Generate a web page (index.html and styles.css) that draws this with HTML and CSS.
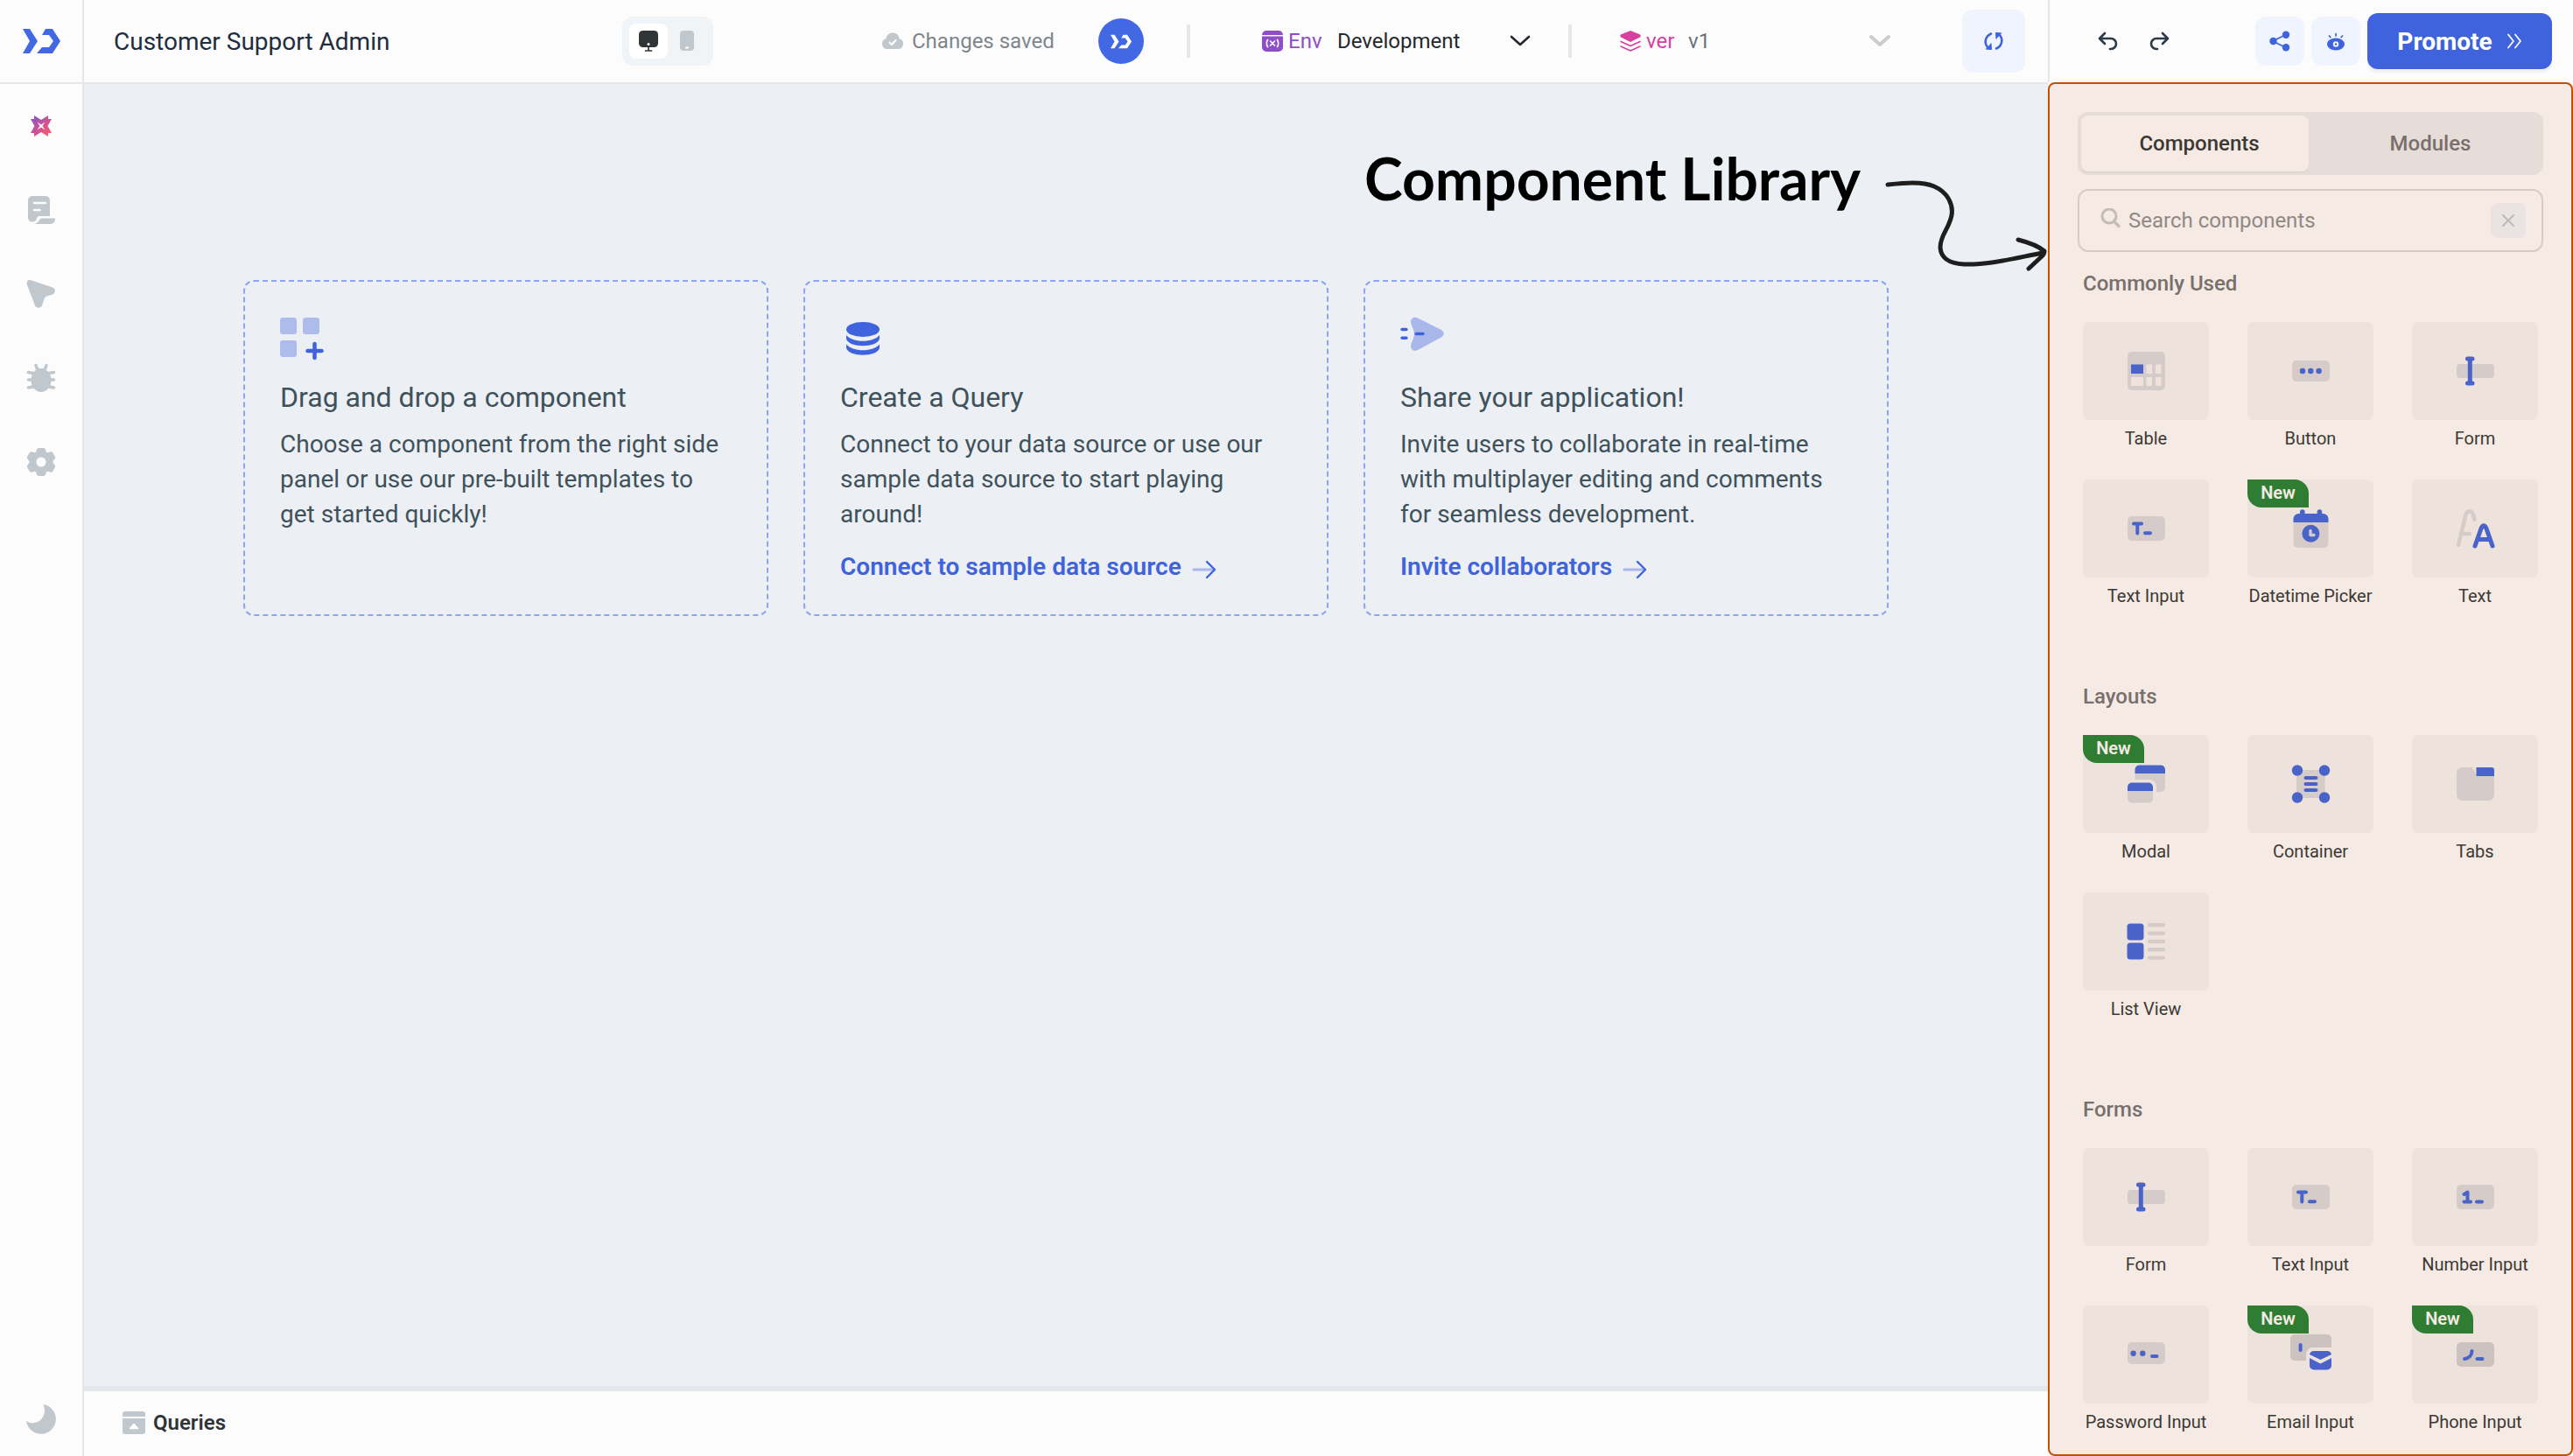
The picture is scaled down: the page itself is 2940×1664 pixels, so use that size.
FILE: index.html
```html
<!DOCTYPE html>
<html lang="en">
<head>
<meta charset="utf-8">
<meta name="viewport" content="width=device-width, initial-scale=1">
<title>Customer Support Admin</title>
<link rel="stylesheet" href="styles.css">
</head>
<body>
<svg class="sprite" aria-hidden="true">
  <symbol id="logo" viewBox="0 0 43 28"><path fill="currentColor" d="M0 0h8l9 14-9 14H0l8-14zM26 0h8l9 14-9 14H16l6-7h8l5-7-5-7h-8z"/></symbol>
  <symbol id="arrow" viewBox="0 0 28 22"><path d="M2 11h23" fill="none" stroke="#a9b8eb" stroke-width="3" stroke-linecap="round"/><path d="M17 2l9 9-9 9" fill="none" stroke="#3e63dd" stroke-width="2.4" stroke-linecap="round" stroke-linejoin="round"/></symbol>
  <symbol id="form" viewBox="0 0 52 52"><rect class="soft" x="5" y="18" width="43" height="16" rx="4"/><path class="ink" d="M20.3 12v28M17.5 12h5.500M17.500 40h5.500"/></symbol>
  <symbol id="text-input" viewBox="0 0 52 52"><rect class="soft" x="5" y="12" width="43" height="28" rx="5"/><path class="ink thin" d="M12 20.500h9M16.300 20.500v11M25 31.300h6"/></symbol>
</svg>

<div class="app">
  <aside class="sidebar">
    <a class="brand" href="#" aria-label="Home"><svg width="43" height="28"><use href="#logo"/></svg></a>
    <nav class="tools" aria-label="Tools">
      <button aria-label="Copilot"><svg width="24" height="24" viewBox="0 0 24 24"><defs><linearGradient id="g" x1="0" y1="0" x2="1" y2="1"><stop offset="0.100" stop-color="#9150c8"/><stop offset="0.500" stop-color="#cb5296"/><stop offset="0.900" stop-color="#fb5c6f"/></linearGradient></defs><path fill="url(#g)" d="M4 0l8 5 8-5v4h4l-4.500 8 4.500 8h-4v4l-8-5-8 5v-4H0l4.500-8L0 4h4z"/><path fill="#fcfcfd" d="M7.500 7.500l4.500 3 4.500-3-3 4.500 3 4.500-4.500-3-4.500 3 3-4.500z"/></svg></button>
      <button aria-label="Pages"><svg width="34" height="34" viewBox="0 0 34 34"><path fill="#c1c8cd" d="M7 1h15a5 5 0 0 1 5 5v18H15c-2 0-2.500 1-3 3s-2 3.500-5 3.500-5-2-5-5V6a5 5 0 0 1 5-5z"/><path fill="#c1c8cd" d="M17 26.500h16c0 4-2 6.500-5.500 6.500H9c4-.5 4.500-3.500 8-6.500z"/><path d="M9 9h13M9 17h6.500" stroke="#fcfcfd" stroke-width="2.600" stroke-linecap="round"/></svg></button>
      <button aria-label="Inspector"><svg width="34" height="34" viewBox="0 0 34 34"><path fill="#c1c8cd" d="M4.500 1.100l25 8.200c4.500 1.700 4.500 7 0 8.500l-6 1.700c-1.500.5-2.500 1.500-3 3l-2 6.500c-1.500 5-7.500 5-9 0L.8 6C0 2.500 2 .5 4.500 1.100z"/></svg></button>
      <button aria-label="Debugger"><svg width="34" height="34" viewBox="0 0 34 34"><ellipse cx="17" cy="19.500" rx="11.500" ry="13.500" fill="#c1c8cd"/><path d="M11 2.500c.5 3 1 4 3 5.500M23 2.500c-.5 3-1 4-3 5.500M2.500 10.500l5 1 3 3M31.500 10.500l-5 1-3 3M2.500 19h6M31.500 19h-6M2.500 28l5-1 3-3M31.500 28l-5-1-3-3" fill="none" stroke="#c1c8cd" stroke-width="3.600" stroke-linecap="round"/></svg></button>
      <button aria-label="Settings"><svg width="34" height="34" viewBox="0 0 34 34"><path fill="#c1c8cd" fill-rule="evenodd" d="M14 1h6c2.500 0 2 4 3.500 5s4.500-2 6.500 0l3 5c1 2.500-2.500 3.500-2.500 6s3.500 3.500 2.500 6l-3 5c-2 2-5-1-6.500 0s-1 5-3.500 5h-6c-2.500 0-2-4-3.500-5s-4.500 2-6.500 0l-3-5c-1-2.500 2.500-3.500 2.500-6S0 13.500 1 11l3-5c2-2 5 1 6.500 0S11.500 1 14 1zm3 10.500a5.500 5.500 0 1 0 0 11 5.500 5.500 0 0 0 0-11z"/></svg></button>
    </nav>
    <button class="theme" aria-label="Dark mode"><svg width="34" height="34" viewBox="0 0 34 34"><path fill="#c1c8cd" d="M19.500 0A17 17 0 1 1 0 19c7 4.500 15 2 19-4.500 2.500-4.500 2.500-9.500.5-14.500z"/></svg></button>
  </aside>

  <main class="workspace">
    <header class="topbar">
      <h1 class="app-name">Customer Support Admin</h1>
      <div class="devices" role="group" aria-label="Layout">
        <button class="device active" aria-label="Desktop"><svg width="24" height="24" viewBox="0 0 24 24"><rect x="1" y="0" width="22" height="19" rx="4.500" fill="#2f3437"/><circle cx="12" cy="15.500" r="1.500" fill="#fff"/><path d="M12 19v4M8.500 23h7" stroke="#2f3437" stroke-width="1.700" stroke-linecap="round"/></svg></button>
        <button class="device" aria-label="Mobile"><svg width="24" height="24" viewBox="0 0 24 24"><rect x="4" y="0" width="16" height="23" rx="4" fill="#c1c8cd"/><path d="M11 19.500h2" stroke="#fff" stroke-width="2" stroke-linecap="round"/></svg></button>
      </div>
      <p class="status"><svg width="24" height="20" viewBox="0 0 24 20"><path fill="#c1c8cd" d="M6 19a6 6 0 0 1-1.500-11.800C5 3 8 .5 12 .5S19 3 19.500 7.200A6 6 0 0 1 18 19z"/><path d="M8.500 11.500l2.500 2.500 4.500-5" fill="none" stroke="#fff" stroke-width="2" stroke-linecap="round" stroke-linejoin="round"/></svg>Changes saved</p>
      <button class="avatar" aria-label="Account"><svg width="24" height="17"><use href="#logo"/></svg></button>
      <span class="rule"></span>
      <div class="picker env">
        <label for="env"><svg width="24" height="24" viewBox="0 0 24 24"><path fill="#8e4ec6" d="M0 5a5 5 0 0 1 5-5h14a5 5 0 0 1 5 5zM0 6.500h24V19a5 5 0 0 1-5 5H5a5 5 0 0 1-5-5z"/><path d="M6.500 10.500c-1.500 2.500-1.500 5.500 0 8M17.500 10.500c1.500 2.500 1.500 5.500 0 8M9.500 12l5 5M14.500 12l-5 5" fill="none" stroke="#fff" stroke-width="1.700" stroke-linecap="round"/></svg>Env</label>
        <div class="choice"><select id="env"><option>Development</option></select><svg width="24" height="16" viewBox="0 0 24 16"><path d="M2 3l10 9L22 3" fill="none" stroke="#24292d" stroke-width="2.600" stroke-linecap="round" stroke-linejoin="round"/></svg></div>
      </div>
      <span class="rule"></span>
      <div class="picker ver">
        <label for="ver"><svg width="24" height="24" viewBox="0 0 24 24"><path fill="#d6409f" d="M12 0l11 4.500c1 .6 1 2.400 0 3L12 13 1 7.500c-1-.6-1-2.400 0-3z"/><path d="M1 12.500l11 5 11-5M1 18l11 5 11-5" fill="none" stroke="#d6409f" stroke-width="1.600" stroke-linecap="round" stroke-linejoin="round"/></svg>ver</label>
        <div class="choice"><select id="ver"><option>v1</option></select><svg width="24" height="16" viewBox="0 0 24 16"><path d="M2 3l10 9L22 3" fill="none" stroke="#ccc" stroke-width="4" stroke-linecap="round" stroke-linejoin="round"/></svg></div>
      </div>
      <button class="refresh" aria-label="Refresh"><svg width="22" height="22" viewBox="0 0 22 22"><path d="M8 2.500C-1 7 1 16 5.500 19M14 19.500c9-4.500 7-13.500 2.500-16.500" fill="none" stroke="#3e63dd" stroke-width="2.600" stroke-linecap="round"/><path d="M2 20l6.500.5-.5-7M20 2l-6.500-.5.500 7" fill="#3e63dd" stroke="#3e63dd" stroke-width="1" stroke-linejoin="round"/></svg></button>
    </header>

    <section class="canvas">
      <div class="callout">
        <h2>Component Library</h2>
        <svg viewBox="2140 96 200 224" width="200" height="224" aria-hidden="true"><path d="M2157 211C2176 209 2196 207 2210 213 2226 220 2232 234 2230 246 2227 262 2217 268 2217 283 2218 296 2228 301 2244 302 2272 303 2302 295 2334 289M2306 274C2318 277 2330 282 2336 287Q2336 290 2333 293L2318 307" fill="none" stroke="#1e1e1e" stroke-width="5" stroke-linecap="round" stroke-linejoin="round"/></svg>
      </div>
      <div class="cards">
        <article class="card">
          <svg width="50" height="50" viewBox="0 0 50 50"><g fill="#aebcec"><rect y="1" width="19" height="19" rx="3"/><rect x="26" y="1" width="19" height="19" rx="3"/><rect y="27" width="19" height="19" rx="3"/></g><path d="M39.500 31v16M31.500 39h16" stroke="#3e63dd" stroke-width="4.500" stroke-linecap="round"/></svg>
          <h3>Drag and drop a component</h3>
          <p>Choose a component from the right side panel or use our pre-built templates to get started quickly!</p>
        </article>
        <article class="card">
          <svg width="50" height="50" viewBox="0 0 50 50" fill="#3e63dd"><ellipse cx="26" cy="14.500" rx="19" ry="8.500"/><path d="M7 21c7 9 31 9 38 0v4c-2 11-36 11-38 0zM7 31.500c7 9 31 9 38 0v4c-2 11-36 11-38 0z"/></svg>
          <h3>Create a Query</h3>
          <p>Connect to your data source or use our sample data source to start playing around!</p>
          <a href="#">Connect to sample data source<svg width="28" height="22"><use href="#arrow"/></svg></a>
        </article>
        <article class="card">
          <svg width="50" height="50" viewBox="0 0 50 50"><path fill="#a9b8eb" d="M12 6c0-4 3-6 7-5l27 13.500c5 2.500 5 7 0 9.500L19 38.500c-4 1-7-1-7-5 0-3 4-10 4-14S12 9 12 6z"/><path d="M2 14.500h5M2 24.300h5M18 19.500h8" stroke="#3e63dd" stroke-width="3.400" stroke-linecap="round"/></svg>
          <h3>Share your application!</h3>
          <p>Invite users to collaborate in real-time with multiplayer editing and comments for seamless development.</p>
          <a href="#">Invite collaborators<svg width="28" height="22"><use href="#arrow"/></svg></a>
        </article>
      </div>
    </section>

    <footer class="queries"><button><svg width="26" height="26" viewBox="0 0 26 26"><path fill="#c1c8cd" d="M0 6V3a3 3 0 0 1 3-3h20a3 3 0 0 1 3 3v3zM0 8h26v15a3 3 0 0 1-3 3H3a3 3 0 0 1-3-3z"/><path d="M8.500 19.500l4.500-5 4.500 5z" fill="#fff" stroke="#fff" stroke-width="1.500" stroke-linejoin="round"/></svg>Queries</button></footer>
  </main>

  <div class="right">
    <header class="actions">
      <div class="history">
        <button aria-label="Undo"><svg width="24" height="22" viewBox="0 0 24 22"><path d="M8 2L2 8l6 6M2 8h13a6 6 0 0 1 0 12h-1" fill="none" stroke="#2b3a48" stroke-width="2.600" stroke-linecap="round" stroke-linejoin="round"/></svg></button>
        <button aria-label="Redo"><svg width="24" height="22" viewBox="0 0 24 22"><path d="M16 2l6 6-6 6M22 8H9a6 6 0 0 0 0 12h1" fill="none" stroke="#2b3a48" stroke-width="2.600" stroke-linecap="round" stroke-linejoin="round"/></svg></button>
      </div>
      <div class="publish">
        <button class="square" aria-label="Share"><svg width="24" height="24" viewBox="0 0 24 24"><path d="M4 12L19 4.500M4 12l15 7.500" stroke="#3e63dd" stroke-width="1.800"/><g fill="#3e63dd"><circle cx="4.500" cy="12" r="4.200"/><circle cx="19" cy="4.700" r="4.200"/><circle cx="19" cy="19.300" r="4.200"/></g></svg></button>
        <button class="square" aria-label="Preview"><svg width="24" height="24" viewBox="0 0 24 24"><ellipse cx="12" cy="15.500" rx="10" ry="7" fill="#3e63dd"/><circle cx="12" cy="15.500" r="3.200" fill="#f0f4ff"/><circle cx="12" cy="15.500" r="1.200" fill="#3e63dd"/><path d="M12 3.500v2.500M4.500 6l1.500 1.700M19.500 6L18 7.700" stroke="#3e63dd" stroke-width="1.700" stroke-linecap="round"/></svg></button>
        <button class="promote">Promote<svg width="18" height="18" viewBox="0 0 18 18"><path d="M2 1.500l6 7.500-6 7.500M10 1.500l6 7.500-6 7.500" fill="none" stroke="#fff" stroke-width="1.800" stroke-linecap="round" stroke-linejoin="round"/></svg></button>
      </div>
    </header>

    <section class="library" aria-label="Component library">
      <div class="tabs" role="tablist">
        <button class="tab active" role="tab" aria-selected="true">Components</button>
        <button class="tab" role="tab" aria-selected="false">Modules</button>
      </div>
      <div class="search">
        <svg width="24" height="24" viewBox="0 0 24 24"><circle cx="10" cy="8" r="8" fill="none" stroke="#c3bcb8" stroke-width="3" transform="translate(0 1)"/><path d="M16 15.500l5 5" stroke="#c3bcb8" stroke-width="3.200" stroke-linecap="round"/></svg>
        <input type="search" aria-label="Search components" placeholder="Search components">
        <button aria-label="Clear search"><svg width="14" height="14" viewBox="0 0 14 14"><path d="M1 1l12 12M13 1L1 13" stroke="#bfb8b9" stroke-width="1.900" stroke-linecap="round"/></svg></button>
      </div>

      <section class="group">
        <h2>Commonly Used</h2>
        <div class="grid">
          <button class="component"><span class="tile"><svg viewBox="0 0 52 52"><path class="soft" fill-rule="evenodd" d="M10 4h33a5 5 0 0 1 5 5v34a5 5 0 0 1-5 5H10a5 5 0 0 1-5-5V9a5 5 0 0 1 5-5zM9 33v10h14V33zM26.500 33v10H33V33zM37 33v10h6.500V33zM26.500 18.500V29H33V18.500zM37 18.500V29h6.500V18.500z"/><path class="blue" d="M9 18.500h14V29H9z"/></svg></span>Table</button>
          <button class="component"><span class="tile"><svg viewBox="0 0 52 52"><rect class="soft" x="5" y="14" width="43" height="24" rx="5"/><g class="blue"><circle cx="17" cy="26" r="3.200"/><circle cx="26.300" cy="26" r="3.200"/><circle cx="35.600" cy="26" r="3.200"/></g></svg></span>Button</button>
          <button class="component"><span class="tile"><svg><use href="#form"/></svg></span>Form</button>
          <button class="component"><span class="tile"><svg><use href="#text-input"/></svg></span>Text Input</button>
          <button class="component"><span class="tile"><span class="badge">New</span><svg viewBox="0 0 52 52"><path class="soft" d="M6.500 18h40v25a5 5 0 0 1-5 5h-30a5 5 0 0 1-5-5z"/><path class="blue" d="M6.500 19v-4a6 6 0 0 1 6-6H14V7a2.800 2.800 0 0 1 5.600 0v2h14V7a2.800 2.800 0 0 1 5.600 0v2h1.300a6 6 0 0 1 6 6v4z"/><circle class="blue" cx="26.400" cy="31.800" r="10"/><path d="M26 28.500v5h4" fill="none" stroke="#d5ccc9" stroke-width="3.400" stroke-linecap="round" stroke-linejoin="round"/></svg></span>Datetime Picker</button>
          <button class="component"><span class="tile"><svg viewBox="0 0 52 52"><path d="M7 45l8-33c2-8 8-7 9.500 0l1 4M12.500 32h7.500" fill="none" stroke="#d5ccc9" stroke-width="4.500" stroke-linecap="round"/><path class="ink" d="M26 46l7-20c1.800-4.500 4.200-4.500 6 0l7 20M29.500 38.500h13"/></svg></span>Text</button>
        </div>
      </section>

      <section class="group">
        <h2>Layouts</h2>
        <div class="grid">
          <button class="component"><span class="tile"><span class="badge">New</span><svg viewBox="0 0 52 52"><path class="soft" d="M13.500 13h34.500v17a5 5 0 0 1-5 5h-5v-6a8 8 0 0 0-8-8h-16.500zM5 33h29v9.500a5 5 0 0 1-5 5H10a5 5 0 0 1-5-5z"/><path class="blue" d="M13.500 14V9.500a5 5 0 0 1 5-5H43a5 5 0 0 1 5 5V14zM5 34v-4.500a5 5 0 0 1 5-5h19a5 5 0 0 1 5 5V34z"/></svg></span>Modal</button>
          <button class="component"><span class="tile"><svg viewBox="0 0 52 52"><path class="soft" d="M10 10h32.500v32H10z"/><g class="blue"><circle cx="11" cy="10.500" r="6.200"/><circle cx="42" cy="10.500" r="6.200"/><circle cx="11" cy="41.500" r="6.200"/><circle cx="42" cy="41.500" r="6.200"/></g><path class="ink thin" d="M20.500 19h12M20.500 26h12M20.500 33h12"/></svg></span>Container</button>
          <button class="component"><span class="tile"><svg viewBox="0 0 52 52"><path class="soft" d="M11 7h12l5 10h20v22a6 6 0 0 1-6 6H11a6 6 0 0 1-6-6V13a6 6 0 0 1 6-6z"/><path class="blue" d="M27.500 7h17.500a3 3 0 0 1 3 3v7H27.500z"/></svg></span>Tabs</button>
          <button class="component"><span class="tile"><svg viewBox="0 0 52 52"><rect class="blue" x="4.500" y="5.500" width="19" height="19" rx="3.500"/><rect class="blue" x="4.500" y="27.500" width="19" height="19" rx="3.500"/><path d="M30 7.300h16M30 16.600h16M30 26h16M30 35.300h16M30 44.600h16" stroke="#d5ccc9" stroke-width="4.400" stroke-linecap="round"/></svg></span>List View</button>
        </div>
      </section>

      <section class="group">
        <h2>Forms</h2>
        <div class="grid">
          <button class="component"><span class="tile"><svg><use href="#form"/></svg></span>Form</button>
          <button class="component"><span class="tile"><svg><use href="#text-input"/></svg></span>Text Input</button>
          <button class="component"><span class="tile"><svg viewBox="0 0 52 52"><rect class="soft" x="5" y="12" width="43" height="28" rx="5"/><path class="ink thin" d="M13.500 23l4-2.500v11M13.500 31.500h7.500M28 31.500h6"/></svg></span>Number Input</button>
          <button class="component"><span class="tile"><svg viewBox="0 0 52 52"><rect class="soft" x="5" y="12" width="43" height="25" rx="5"/><g class="blue"><circle cx="11.600" cy="24.800" r="3.200"/><circle cx="22.300" cy="24.800" r="3.200"/></g><path class="ink thin" d="M33 28h5.500"/></svg></span>Password Input</button>
          <button class="component"><span class="tile"><span class="badge">New</span><svg viewBox="0 0 52 52"><path class="soft dark" d="M8 3h37a5 5 0 0 1 5 5v10H29a8 8 0 0 0-8 8v7H8a5 5 0 0 1-5-5V8a5 5 0 0 1 5-5z"/><path class="ink thin" d="M14.600 15v6"/><path class="blue" d="M30 22h15a5 5 0 0 1 5 4l-12.500 6L25 26a5 5 0 0 1 5-4zM25 30l12.500 6.500L50 30v8.500a5 5 0 0 1-5 5H30a5 5 0 0 1-5-5z"/></svg></span>Email Input</button>
          <button class="component"><span class="tile"><span class="badge">New</span><svg viewBox="0 0 52 52"><rect class="soft dark" x="5" y="12" width="43" height="28" rx="5"/><path class="ink thin" d="M22.500 22c0 5-3.500 8.500-8.500 9M28.500 31h6"/></svg></span>Phone Input</button>
        </div>
      </section>
    </section>
  </div>
</div>
</body>
</html>
```

FILE: styles.css
```css
* { box-sizing: border-box; }

body {
  margin: 0;
  background: #fcfcfd;
  color: #2f3437;
  font-family: Roboto, "Liberation Sans", sans-serif;
  font-size: 24px;
}

h1, h2, h3, p { margin: 0; }

button {
  display: flex;
  align-items: center;
  justify-content: center;
  padding: 0;
  border: 0;
  background: none;
  color: inherit;
  font: inherit;
  cursor: pointer;
}

svg { display: block; flex: none; }

.sprite { position: absolute; width: 0; height: 0; }

.app {
  display: grid;
  grid-template-columns: 96px minmax(0, 1fr) 600px;
  min-height: 100vh;
}

/* Left rail */
.sidebar {
  display: flex;
  flex-direction: column;
  align-items: stretch;
  border-right: 2px solid #e4e8eb;
}

.brand {
  display: flex;
  align-items: center;
  justify-content: center;
  height: 96px;
  border-bottom: 2px solid #e4e8eb;
  color: #4368e3;
}

.tools {
  display: flex;
  flex-direction: column;
  gap: 32px;
  padding-top: 16px;
}

.tools button, .theme { height: 64px; }

.theme { margin-top: auto; margin-bottom: 10px; }

/* Top bar */
.workspace {
  display: flex;
  flex-direction: column;
}

.topbar {
  display: flex;
  align-items: center;
  height: 96px;
  padding: 0 26px 0 34px;
  border-bottom: 2px solid #e4e8eb;
}

.app-name {
  flex: 1;
  color: #1f2d3d;
  font-size: 28px;
  font-weight: 400;
  white-space: nowrap;
}

.devices {
  display: flex;
  margin-right: 193px;
  padding: 8px;
  border-radius: 12px;
  background: #f1f4f6;
}

.device {
  width: 44px;
  height: 40px;
  border-radius: 8px;
}

.device.active { background: #fff; }

.status {
  display: flex;
  align-items: center;
  gap: 10px;
  width: 194px;
  color: #7e868c;
  white-space: nowrap;
}

.avatar {
  width: 52px;
  height: 52px;
  margin: 0 49px 0 53px;
  border-radius: 50%;
  background: #4368e3;
  color: #fff;
}

.rule {
  width: 4px;
  height: 38px;
  background: #e4e8eb;
}

.picker { display: flex; align-items: center; }

.picker label {
  display: flex;
  align-items: center;
  gap: 6px;
}

.env { margin: 0 43px 0 82px; }
.env label { width: 86px; color: #8e4ec6; }
.env .choice { width: 221px; color: #24292d; }

.ver { margin: 0 82px 0 55px; }
.ver label { width: 78px; color: #d6409f; }
.ver .choice { width: 231px; color: #6a737b; }

.choice {
  display: grid;
  align-items: center;
}

.choice select, .choice svg { grid-area: 1 / 1; }

.choice svg { justify-self: end; pointer-events: none; }

.choice select {
  width: 100%;
  padding: 0;
  border: 0;
  background: none;
  color: inherit;
  font: inherit;
  appearance: none;
}

.refresh {
  width: 72px;
  height: 72px;
  border-radius: 12px;
  background: #f0f4ff;
}

/* Canvas */
.canvas {
  flex: 1;
  background: #eceff4;
}

.callout {
  display: flex;
  justify-content: flex-end;
  gap: 14px;
}

.callout h2 {
  padding-top: 68px;
  color: #000;
  font-family: Lato, sans-serif;
  font-size: 66px;
  font-weight: 700;
  line-height: 80px;
  white-space: nowrap;
}

.cards {
  display: grid;
  grid-template-columns: repeat(3, 600px);
  justify-content: center;
  gap: 40px;
}

.card {
  padding: 40px 40px 34px;
  border: 2px dashed #8da4ef;
  border-radius: 12px;
  color: #3f525b;
  font-size: 28px;
  line-height: 40px;
}

.card h3 {
  margin: 18px 0 10px;
  font-size: 32px;
  font-weight: 400;
  line-height: 48px;
}

.card a {
  display: flex;
  align-items: center;
  gap: 12px;
  margin-top: 20px;
  color: #3e63dd;
  font-weight: 600;
  text-decoration: none;
}

.card a svg { margin-top: 6px; }

.queries {
  display: flex;
  align-items: center;
  height: 80px;
  padding: 0 44px 2px;
  border-top: 6px solid #e3e6ea;
}

.queries button { gap: 9px; font-weight: 600; }

/* Right column */
.right {
  display: flex;
  flex-direction: column;
}

.actions {
  display: flex;
  align-items: center;
  justify-content: space-between;
  height: 94px;
  padding: 0 24px 0 51px;
  border-left: 2px solid #e4e8eb;
}

.history { display: flex; gap: 26px; }
.history button { width: 32px; height: 56px; }

.publish { display: flex; align-items: center; gap: 8px; }

.square {
  width: 56px;
  height: 56px;
  border-radius: 12px;
  background: #f0f4ff;
}

.promote {
  gap: 16px;
  width: 211px;
  height: 64px;
  border-radius: 12px;
  background: #3e63dd;
  box-shadow: 0 4px 2px #f0f0f1;
  color: #fff;
  font-size: 28px;
  font-weight: 700;
}

.library {
  flex: 1;
  padding: 32px 32px 22px;
  border: 2px solid #c14f05;
  border-radius: 8px;
  background: #f5eae4;
}

.tabs {
  display: grid;
  grid-template-columns: 1fr 1fr;
  gap: 4px;
  padding: 4px;
  border-radius: 12px;
  background: #e7ddd8;
}

.tab {
  height: 64px;
  padding-left: 10px;
  border-radius: 8px;
  color: #77706c;
  font-weight: 500;
}

.tab.active { background: #f5eae4; color: #3c3935; box-shadow: 0 1px 2px #d9cfca; }

.search {
  display: flex;
  align-items: center;
  height: 72px;
  margin-top: 16px;
  padding: 0 18px 0 24px;
  border: 2px solid #d5ccc8;
  border-radius: 12px;
}

.search > svg { margin-bottom: 4px; }

.search input {
  flex: 1;
  min-width: 0;
  padding: 0 8px;
  border: 0;
  outline: 0;
  background: none;
  color: #3c3935;
  font: inherit;
  appearance: none;
}

.search input::placeholder { color: #8f8985; }

.search button {
  width: 40px;
  height: 40px;
  border-radius: 8px;
  background: #ebe2e4;
}

.group { padding: 18px 6px 0; }
.group + .group { padding-top: 84px; }

.group h2 {
  margin-bottom: 26px;
  color: #77706c;
  font-size: 24px;
  font-weight: 500;
  line-height: 36px;
}

.grid {
  display: grid;
  grid-template-columns: repeat(3, minmax(0, 1fr));
  gap: 34px 44px;
}

.component {
  flex-direction: column;
  align-items: stretch;
  gap: 8px;
  color: #3c3935;
  font-size: 20px;
  line-height: 26px;
  white-space: nowrap;
}

.tile {
  position: relative;
  display: flex;
  align-items: center;
  justify-content: center;
  height: 112px;
  border-radius: 8px;
  background: #eee2dc;
}

.tile svg { width: 52px; height: 52px; }

.badge {
  position: absolute;
  top: 0;
  left: 0;
  width: 70px;
  height: 32px;
  border-radius: 0 16px 0 16px;
  background: #2f7d32;
  color: #f5eae4;
  font-weight: 600;
  line-height: 30px;
}

.soft { fill: #d5ccc9; }
.soft.dark { fill: #ccc3c0; }
.blue { fill: #4a63c9; }

.ink {
  fill: none;
  stroke: #4a63c9;
  stroke-width: 5;
  stroke-linecap: round;
  stroke-linejoin: round;
}

.ink.thin { stroke-width: 4; }
```
